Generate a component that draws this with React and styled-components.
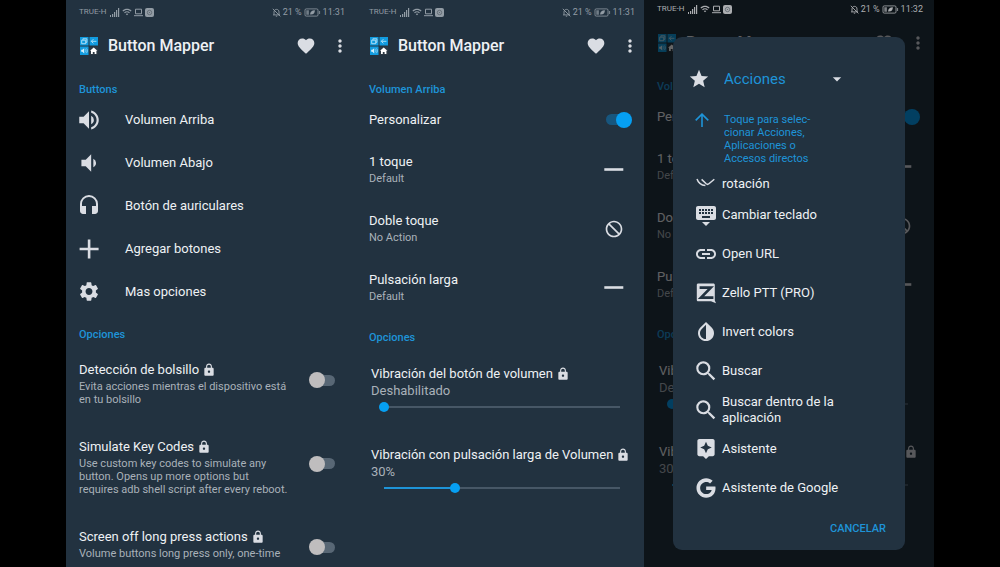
import React, { useState } from 'react';
import styled, { createGlobalStyle, css } from 'styled-components';
import {
  MdArrowDropDown,
  MdAssistant,
  MdDoNotDisturb,
  MdFavorite,
  MdHeadset,
  MdInvertColors,
  MdKeyboardHide,
  MdLink,
  MdLock,
  MdMoreVert,
  MdSearch,
  MdSettings,
  MdStar,
  MdVolumeDown,
  MdVolumeUp,
  MdWifi,
} from 'react-icons/md';
import { FaGoogle } from 'react-icons/fa';

const colors = {
  surface: '#223240',
  accent: '#1e94d8',
  bright: '#069ff2',
  text: '#eef1f4',
  muted: '#a9b1b9',
  icon: '#dadde3',
};

const GlobalStyle = createGlobalStyle`
  * {
    box-sizing: border-box;
  }

  body {
    margin: 0;
    background: #000;
    color: ${colors.text};
    font-family: Roboto, "Noto Sans", sans-serif;
    font-size: 13px;
    line-height: 16px;
  }

  button, input, select {
    font: inherit;
  }

  h1, h2, p, ul {
    margin: 0;
    padding: 0;
  }

  svg {
    display: block;
    flex-shrink: 0;
  }
`;

const Gallery = styled.main`
  display: flex;
  height: 100vh;
  padding: 0 66px;
  overflow: hidden;
`;

const Screen = styled.section`
  position: relative;
  flex: 1 1 0;
  min-width: 0;
  background: ${colors.surface};
  overflow: hidden;

  & + &:last-child {
    margin-left: -2px;
  }
`;

const StatusWrapper = styled.div`
  position: relative;
  z-index: 2;
  display: flex;
  align-items: center;
  justify-content: space-between;
  height: ${({ $compact }) => ($compact ? '21px' : '24px')};
  padding: ${({ $compact }) => ($compact ? '0 11px 3px 13px' : '0 11px 0 13px')};
  color: ${({ $compact }) => ($compact ? '#abadb0' : '#929ca5')};
  font-size: 9px;
`;

const StatusGroup = styled.div`
  display: flex;
  align-items: center;
  gap: 2px;
`;

const Carrier = styled.span`
  margin-right: 2px;
  font-size: 8px;
`;

const AppHeader = styled.header`
  display: flex;
  align-items: center;
  height: 44px;
  padding: 0 6px 0 14px;
`;

const AppTitle = styled.h1`
  flex: 1;
  margin-left: 10px;
  font-size: 16px;
  font-weight: 500;
  line-height: 20px;
`;

const IconButton = styled.button`
  margin-left: 14px;
  padding: 0;
  border: 0;
  background: none;
  color: ${colors.icon};
`;

const SectionTitle = styled.h2`
  margin-top: ${({ $space }) => $space}px;
  padding-left: 13px;
  color: ${colors.accent};
  font-size: 11px;
  font-weight: 500;
  line-height: 16px;
`;

const MenuButton = styled.button`
  display: flex;
  align-items: center;
  gap: 23px;
  width: 100%;
  height: 43px;
  padding: 0 10px;
  border: 0;
  background: none;
  color: inherit;
  text-align: left;

  svg {
    width: 26px;
    color: ${colors.icon};
  }
`;

const OptionList = styled.div`
  display: grid;
  gap: 33px;
  margin-top: 19px;
`;

const OptionRow = styled.label`
  display: flex;
  align-items: center;
  gap: 20px;
  min-height: 44px;
  padding: 0 21px 0 13px;

  input {
    margin-bottom: 8px;
  }
`;

const OptionCopy = styled.span`
  flex: 1;
  align-self: flex-start;
`;

const ItemTitle = styled.span`
  display: flex;
  align-items: center;
  gap: 3px;
  white-space: nowrap;

  svg {
    color: ${colors.icon};
  }
`;

const ItemNote = styled.span`
  display: block;
  margin-top: 2px;
  color: ${colors.muted};
  font-size: 11px;
  line-height: 13px;
`;

/* the input is the track, the thumb hangs over its end */
const Switch = styled.input.attrs({ type: 'checkbox', role: 'switch' })`
  appearance: none;
  display: flex;
  align-items: center;
  flex-shrink: 0;
  width: 22px;
  height: 11px;
  margin: 0 0 0 4px;
  border-radius: 6px;
  background: #586775;

  &::before {
    content: '';
    flex-shrink: 0;
    width: 16px;
    height: 16px;
    margin-left: -4px;
    border-radius: 50%;
    background: #bfbdbe;
  }

  &:checked {
    justify-content: flex-end;
    margin: 0 4px 0 0;
    background: #17567e;
  }

  &:checked::before {
    margin: 0 -4px 0 0;
    background: ${colors.bright};
  }
`;

const ToggleRow = styled.label`
  display: flex;
  align-items: center;
  justify-content: space-between;
  height: 43px;
  padding: 0 14px 0 13px;
`;

const GestureList = styled.div`
  display: grid;
  gap: 28px;
  margin-top: 13px;
`;

const GestureButton = styled.button`
  display: flex;
  align-items: center;
  justify-content: space-between;
  width: 100%;
  padding: 0 22px 0 13px;
  border: 0;
  background: none;
  color: inherit;
  text-align: left;

  svg {
    color: ${colors.icon};
  }
`;

const SliderList = styled.div`
  display: grid;
  gap: 32px;
  margin-top: 20px;
  padding: 0 16px 0 15px;
`;

const SliderField = styled.label`
  display: block;
  padding-bottom: 1px;
`;

const SliderValue = styled.span`
  display: block;
  margin: 1px 0;
  color: ${colors.muted};
`;

const Slider = styled.input.attrs({ type: 'range' })`
  appearance: none;
  display: block;
  width: calc(100% - 13px);
  height: 14px;
  margin: 0 0 0 8px;
  background:
    linear-gradient(
      to right,
      ${colors.accent} var(--filled),
      #475766 var(--filled)
    ) center / calc(100% - 10px) 2px no-repeat;

  &::-webkit-slider-thumb {
    appearance: none;
    width: 10px;
    height: 10px;
    border-radius: 50%;
    background: ${colors.bright};
  }
`;

const Scrim = styled.div`
  position: absolute;
  inset: 0;
  z-index: 1;
  background: rgba(0, 0, 0, 0.6);
`;

const Dialog = styled.div`
  position: absolute;
  top: 37px;
  left: 29px;
  right: 29px;
  z-index: 3;
  padding-top: 29px;
  border-radius: 9px;
  background: ${colors.surface};
`;

const DialogHead = styled.div`
  display: flex;
  align-items: center;
  height: 26px;
  padding: 0 58px 0 15px;
  color: ${colors.icon};
`;

const KindSelect = styled.select`
  appearance: none;
  flex: 1;
  min-width: 0;
  margin-left: 14px;
  padding: 0;
  border: 0;
  background: none;
  color: ${colors.accent};
  font-size: 15px;
  line-height: 20px;
`;

const Hint = styled.div`
  display: flex;
  gap: 15px;
  margin: 21px 0 12px;
  padding-left: 22px;
  color: ${colors.accent};
  font-size: 11px;
  line-height: 13px;

  p {
    width: 96px;
  }
`;

const ActionList = styled.ul`
  display: flex;
  flex-direction: column;
  justify-content: flex-end;
  max-height: 330px;
  overflow: hidden;
  list-style: none;
`;

const ActionItem = styled.li`
  flex-shrink: 0;
`;

const ActionButton = styled.button`
  display: flex;
  align-items: center;
  gap: 3px;
  width: 100%;
  height: 39px;
  padding: 0 50px 0 20px;
  border: 0;
  background: none;
  color: inherit;
  text-align: left;

  svg {
    width: 26px;
    color: ${colors.icon};
  }

  ${({ $secondLine }) => $secondLine && css`
    span {
      padding-top: 16px;
    }
  `}
`;

const DialogFoot = styled.div`
  display: flex;
  align-items: center;
  justify-content: flex-end;
  height: 43px;
  padding-right: 19px;
`;

const CancelButton = styled.button`
  padding: 0;
  border: 0;
  background: none;
  color: ${colors.accent};
  font-size: 11px;
  font-weight: 500;
`;

const SignalIcon = () => (
  <svg width="10" height="9" viewBox="0 0 10 9" fill="currentColor">
    <path d="M0 7h1v2H0zM2 6h1.2v3H2zM4 4h1.2v5H4zM6 2h1.2v7H6zM8 0h1.2v9H8z" />
  </svg>
);

const LaptopIcon = () => (
  <svg width="9" height="9" viewBox="0 0 9 9" fill="none" stroke="currentColor">
    <path d="M1.5 1.2h6v4.6h-6zM0 7.7h9" />
  </svg>
);

const BadgeIcon = () => (
  <svg width="9" height="9" viewBox="0 0 9 9">
    <rect width="9" height="9" rx="2" fill="currentColor" />
    <circle cx="4.5" cy="4.5" r="2.2" fill="none" stroke="#59636c" strokeWidth="0.8" />
    <circle cx="4.5" cy="4.5" r="0.6" fill="#59636c" />
  </svg>
);

const BellOffIcon = () => (
  <svg width="9" height="9" viewBox="0 0 9 9" fill="none" stroke="currentColor" strokeWidth="0.9">
    <path d="M2 6.8V4C2 2.3 3 1.4 4.5 1.4S7 2.3 7 4v2.8M1 6.9h7M3.8 8.2h1.4M0.8 0.8l7.6 7.6" />
  </svg>
);

const BatteryIcon = () => (
  <svg width="17" height="9" viewBox="0 0 17 9">
    <rect x="1" y="0.9" width="13" height="7.2" rx="1.2" fill="none" stroke="currentColor" strokeWidth="0.8" />
    <path d="M2.3 2.2h2.6v4.6H2.3zM14.9 3h1.2v3h-1.2z" fill="currentColor" opacity="0.7" />
    <path d="M6.1 6.6c0-2.8 1.6-4.4 4.8-4.4 0 2.8-1.4 4.5-4.2 4.4z" fill="currentColor" />
  </svg>
);

const LogoIcon = () => (
  <svg width="18" height="18" viewBox="0 0 18 18">
    <path d="M0 0h8.5v8.5H0zM9.5 0H18v8.5H9.5zM0 9.5h8.5V18H0z" fill="#119bdf" />
    <path d="M9.5 9.5H18V18H9.5z" fill="#2b3843" />
    <g fill="none" stroke="#b9e3f7" strokeWidth="0.9">
      <path d="M1.7 3.2h4v3.5h-4zM2.9 2.9V1.8h4v3.5H6" />
      <path d="M16.4 4.3h-5M13.4 2.2l-2.1 2.1 2.1 2.1" />
      <path d="M5.2 12.3c1 .8 1 2.2 0 3M6.2 11.4c1.6 1.3 1.6 3.5 0 4.8" strokeWidth="0.7" />
    </g>
    <path d="M1.2 12.8h1.2l1.8-1.6v5.2l-1.8-1.6H1.2z" fill="#d5effb" />
    <path d="M13.7 10.5l3.7 3.3h-1v3.1h-1.8v-2h-1.8v2H11v-3.1h-1z" fill="#fff" />
  </svg>
);

const PlusIcon = () => (
  <svg width="26" height="26" viewBox="0 0 26 26" fill="currentColor">
    <path d="M11.8 3.5h2.6v8.2h8.2v2.6h-8.2v8.2h-2.6v-8.2H3.6v-2.6h8.2z" />
  </svg>
);

const DashIcon = () => (
  <svg width="20" height="20" viewBox="0 0 20 20" fill="currentColor">
    <path d="M0.3 8.2h19v2.6h-19z" />
  </svg>
);

const UpIcon = () => (
  <svg width="14" height="14" viewBox="0 0 14 14" fill="none" stroke="currentColor" strokeWidth="1.6">
    <path d="M7 14V1.4M0.7 7.4L7 1.1l6.3 6.3" />
  </svg>
);

const RotationIcon = () => (
  <svg width="24" height="24" viewBox="0 0 24 24" fill="none" stroke="currentColor" strokeWidth="1.5">
    <path d="M3 15c1.2 3.6 4.2 6.2 8.4 6.6M7.6 15.4l4.6 4.4c.9.8 1.8.8 2.7 0l5.4-4.6" />
  </svg>
);

const ZelloIcon = () => (
  <svg width="24" height="24" viewBox="0 0 24 24">
    <path d="M4.2 2.6h15.2c.8 0 1.4.6 1.4 1.4v15.4l1.2 2.8-5-1.9H4.2c-.8 0-1.4-.6-1.4-1.4V4c0-.8.6-1.4 1.4-1.4z" fill="currentColor" />
    <path d="M5.6 6.6h11.2L7 16.6h12.4" fill="none" stroke={colors.surface} strokeWidth="2.7" />
  </svg>
);

const menu = [
  { label: 'Volumen Arriba', icon: <MdVolumeUp size={26} /> },
  { label: 'Volumen Abajo', icon: <MdVolumeDown size={26} /> },
  { label: 'Botón de auriculares', icon: <MdHeadset size={24} /> },
  { label: 'Agregar botones', icon: <PlusIcon /> },
  { label: 'Mas opciones', icon: <MdSettings size={23} /> },
];

const options = [
  {
    title: 'Detección de bolsillo',
    note: 'Evita acciones mientras el dispositivo está en tu bolsillo',
  },
  {
    title: 'Simulate Key Codes',
    note: 'Use custom key codes to simulate any button. Opens up more options but requires adb shell script after every reboot.',
  },
  {
    title: 'Screen off long press actions',
    note: 'Volume buttons long press only, one-time',
  },
];

const gestures = [
  { title: '1 toque', note: 'Default', icon: <DashIcon /> },
  { title: 'Doble toque', note: 'No Action', icon: <MdDoNotDisturb size={20} /> },
  { title: 'Pulsación larga', note: 'Default', icon: <DashIcon /> },
];

const actions = [
  { label: 'rotación', icon: <RotationIcon />, secondLine: true },
  { label: 'Cambiar teclado', icon: <MdKeyboardHide size={24} /> },
  { label: 'Open URL', icon: <MdLink size={24} /> },
  { label: 'Zello PTT (PRO)', icon: <ZelloIcon /> },
  { label: 'Invert colors', icon: <MdInvertColors size={24} /> },
  { label: 'Buscar', icon: <MdSearch size={26} /> },
  { label: 'Buscar dentro de la aplicación', icon: <MdSearch size={26} /> },
  { label: 'Asistente', icon: <MdAssistant size={23} /> },
  { label: 'Asistente de Google', icon: <FaGoogle size={20} /> },
];

const StatusBar = ({ time, compact }) => (
  <StatusWrapper $compact={compact}>
    <StatusGroup>
      <Carrier>TRUE-H</Carrier>
      <SignalIcon />
      <MdWifi size={10} />
      <LaptopIcon />
      <BadgeIcon />
    </StatusGroup>
    <StatusGroup>
      <BellOffIcon />
      <span>21 %</span>
      <BatteryIcon />
      <span>{time}</span>
    </StatusGroup>
  </StatusWrapper>
);

const Header = () => (
  <AppHeader>
    <LogoIcon />
    <AppTitle>Button Mapper</AppTitle>
    <IconButton aria-label="Favorite">
      <MdFavorite size={20} />
    </IconButton>
    <IconButton aria-label="More">
      <MdMoreVert size={20} />
    </IconButton>
  </AppHeader>
);

const VibrationSlider = ({ title, initial }) => {
  const [value, setValue] = useState(initial);

  return (
    <SliderField>
      <ItemTitle>
        {title} <MdLock size={14} />
      </ItemTitle>
      <SliderValue>{value === 0 ? 'Deshabilitado' : `${value}%`}</SliderValue>
      <Slider
        value={value}
        style={{ '--filled': `${value}%` }}
        onChange={(e) => setValue(Number(e.target.value))}
      />
    </SliderField>
  );
};

const ButtonSettings = () => (
  <>
    <Header />
    <SectionTitle $space={14}>Volumen Arriba</SectionTitle>
    <ToggleRow>
      Personalizar
      <Switch defaultChecked />
    </ToggleRow>
    <GestureList>
      {gestures.map(({ title, note, icon }) => (
        <GestureButton key={title}>
          <span>
            <ItemTitle>{title}</ItemTitle>
            <ItemNote>{note}</ItemNote>
          </span>
          {icon}
        </GestureButton>
      ))}
    </GestureList>
    <SectionTitle $space={27}>Opciones</SectionTitle>
    <SliderList>
      <VibrationSlider title="Vibración del botón de volumen" initial={0} />
      <VibrationSlider title="Vibración con pulsación larga de Volumen" initial={30} />
    </SliderList>
  </>
);

const ActionDialog = () => (
  <Dialog role="dialog" aria-label="Acciones">
    <DialogHead>
      <MdStar size={22} />
      <KindSelect aria-label="Acciones">
        <option>Acciones</option>
      </KindSelect>
      <MdArrowDropDown size={20} />
    </DialogHead>
    <Hint>
      <UpIcon />
      <p>Toque para selec&shy;cionar Acciones, Aplicaciones o Accesos directos</p>
    </Hint>
    <ActionList>
      {actions.map(({ label, icon, secondLine }) => (
        <ActionItem key={label}>
          <ActionButton $secondLine={secondLine}>
            {icon}
            <span>{label}</span>
          </ActionButton>
        </ActionItem>
      ))}
    </ActionList>
    <DialogFoot>
      <CancelButton>CANCELAR</CancelButton>
    </DialogFoot>
  </Dialog>
);

const App = () => (
  <>
    <GlobalStyle />
    <Gallery>
      <Screen>
        <StatusBar time="11:31" />
        <Header />
        <SectionTitle $space={14}>Buttons</SectionTitle>
        {menu.map(({ label, icon }) => (
          <MenuButton key={label}>
            {icon}
            {label}
          </MenuButton>
        ))}
        <SectionTitle $space={14}>Opciones</SectionTitle>
        <OptionList>
          {options.map(({ title, note }) => (
            <OptionRow key={title}>
              <OptionCopy>
                <ItemTitle>
                  {title} <MdLock size={14} />
                </ItemTitle>
                <ItemNote>{note}</ItemNote>
              </OptionCopy>
              <Switch />
            </OptionRow>
          ))}
        </OptionList>
      </Screen>
      <Screen>
        <StatusBar time="11:31" />
        <ButtonSettings />
      </Screen>
      <Screen>
        <StatusBar time="11:32" compact />
        <ButtonSettings />
        <Scrim />
        <ActionDialog />
      </Screen>
    </Gallery>
  </>
);

export default App;
